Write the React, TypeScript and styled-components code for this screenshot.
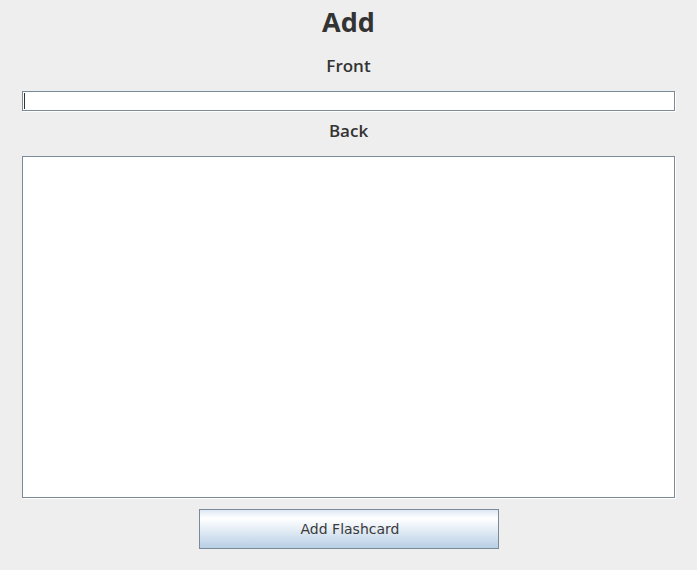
import { useState } from 'react';
import styled, { createGlobalStyle } from 'styled-components';

const GlobalStyle = createGlobalStyle`
  html, body {
    margin: 0;
    padding: 0;
    background: #eeeeee;
  }
`;

const Page = styled.div`
  display: flex;
  flex-direction: column;
  align-items: stretch;
  width: 697px;
  height: 570px;
  padding: 0 22px;
  box-sizing: border-box;
  background: #eeeeee;
  color: #333333;
`;

const Title = styled.h1`
  margin: 0;
  height: 43px;
  line-height: 43px;
  text-align: center;
  font-family: 'Open Sans', 'DejaVu Sans', sans-serif;
  font-size: 27px;
  font-weight: 700;
`;

const Label = styled.div<{ $height: number }>`
  height: ${(p) => p.$height}px;
  line-height: ${(p) => p.$height}px;
  text-align: center;
  font-family: 'Open Sans', 'DejaVu Sans', sans-serif;
  font-size: 17px;
  font-weight: 600;
`;

const FieldWrap = styled.div<{ $caret: boolean }>`
  position: relative;
  margin-top: 3px;

  &::after {
    content: '';
    display: ${(p) => (p.$caret ? 'block' : 'none')};
    position: absolute;
    left: 2px;
    top: 2px;
    width: 1px;
    height: 16px;
    background: #333333;
    pointer-events: none;
  }
`;

const Field = styled.input`
  display: block;
  box-sizing: border-box;
  width: 653px;
  height: 20px;
  margin: 0;
  padding: 0 1px;
  border: 1px solid #7a8a99;
  box-shadow: 1px 1px 0 #ffffff;
  background: #ffffff;
  outline: none;
  caret-color: transparent;
  font-family: 'DejaVu Sans', sans-serif;
  font-size: 13px;
  color: #333333;
`;

const Area = styled.textarea`
  display: block;
  box-sizing: border-box;
  width: 653px;
  height: 342px;
  margin: 5px 0 0;
  padding: 2px;
  border: 1px solid #7a8a99;
  box-shadow: 1px 1px 0 #ffffff;
  background: #ffffff;
  outline: none;
  resize: none;
  font-family: 'DejaVu Sans', sans-serif;
  font-size: 13px;
  color: #333333;
`;

const Actions = styled.div`
  display: flex;
  justify-content: center;
  margin-top: 11px;
`;

const Button = styled.button`
  box-sizing: border-box;
  width: 300px;
  height: 40px;
  margin-left: 1px;
  padding: 0 0 0 2px;
  border: 1px solid #7a8a99;
  border-radius: 0;
  background: linear-gradient(to bottom, #dde8f3 0%, #ffffff 22%, #e6eef6 50%, #b8cfe5 100%);
  color: #3a3a3a;
  font-family: 'DejaVu Sans', sans-serif;
  font-size: 14px;
  cursor: pointer;
`;

export default function App() {
  const [front, setFront] = useState('');
  const [back, setBack] = useState('');
  const [focused, setFocused] = useState(true);

  return (
    <>
      <GlobalStyle />
      <Page>
        <Title>Add</Title>
        <Label $height={45}>Front</Label>
        <FieldWrap $caret={focused && front === ''}>
          <Field
            autoFocus
            value={front}
            onFocus={() => setFocused(true)}
            onBlur={() => setFocused(false)}
            onChange={(e) => setFront(e.target.value)}
            style={{ caretColor: front === '' ? 'transparent' : '#333333' }}
          />
        </FieldWrap>
        <Label $height={40}>Back</Label>
        <Area value={back} onChange={(e) => setBack(e.target.value)} />
        <Actions>
          <Button>Add Flashcard</Button>
        </Actions>
      </Page>
    </>
  );
}
